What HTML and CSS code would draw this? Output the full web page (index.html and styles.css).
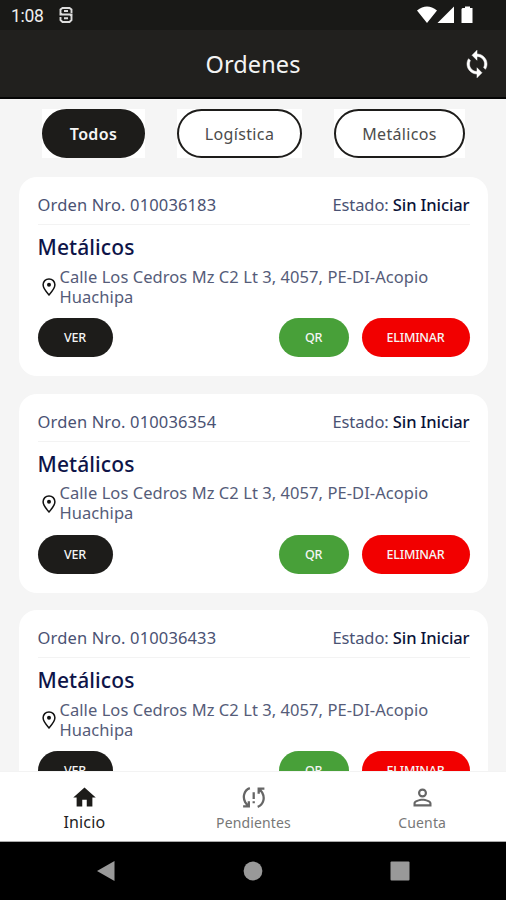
FILE: index.html
```html
<!DOCTYPE html>
<html lang="es">
<head>
<meta charset="utf-8">
<title>Ordenes</title>
<link rel="stylesheet" href="styles.css">
</head>
<body>
<div class="status">
  <span class="time">1:08</span>
  <svg class="badge" viewBox="0 0 14 18"><path d="M12.500 7V3.500L10.500 2h-7L1.500 3.500V7L3 8.500h8L12.500 10v4l-2 2h-7l-2-2v-3M.5 8.500h13M5 5h4M5 12.300h4" fill="none" stroke="#ddd" stroke-width="1.900"/></svg>
  <svg class="signals" viewBox="0 0 58 18"><path d="M0 4.500Q10 -3.500 20 4.500L10 17Z M20.500 17L37 .5V17Z M45.500 2h2.500V.5h5V2h2.500V17h-11V3z" fill="#fff"/></svg>
</div>
<header class="header">
  <h1 class="title">Ordenes</h1>
  <svg class="sync" viewBox="0 0 24 24"><path d="M12 4V1L8 5l4 4V6c3.310 0 6 2.690 6 6 0 1.010-.25 1.970-.7 2.800l1.460 1.460C19.540 15.030 20 13.570 20 12c0-4.420-3.580-8-8-8zm0 14c-3.310 0-6-2.690-6-6 0-1.010.25-1.970.7-2.800L5.240 7.740C4.460 8.970 4 10.430 4 12c0 4.420 3.580 8 8 8v3l4-4-4-4v3z" fill="#fff" stroke="#fff" stroke-width=".4"/></svg>
</header>
<main class="content">
  <div class="filters">
    <div class="chip-box todos"><button class="chip active">Todos</button></div>
    <div class="chip-box logistica"><button class="chip">Logística</button></div>
    <div class="chip-box metalicos"><button class="chip">Metálicos</button></div>
  </div>
  <section class="cards">
    <article class="card">
      <div class="top"><span class="number">Orden Nro. 010036183</span><span class="state">Estado: <b>Sin Iniciar</b></span></div>
      <h2 class="kind">Metálicos</h2>
      <div class="place"><svg class="pin" viewBox="0 0 14 18"><path d="M7 .9C3.600.9 1.100 3.500 1.100 6.800 1.100 10.500 7 16.900 7 16.900S12.900 10.500 12.900 6.800C12.900 3.500 10.400.9 7 .9Z" fill="none" stroke="#111" stroke-width="1.500"/><circle cx="7" cy="6.800" r="2" fill="#111"/></svg><p class="address">Calle Los Cedros Mz C2 Lt 3, 4057, PE-DI-Acopio Huachipa</p></div>
      <div class="actions"><button class="btn view">VER</button><button class="btn qr">QR</button><button class="btn remove">ELIMINAR</button></div>
    </article>
    <article class="card">
      <div class="top"><span class="number">Orden Nro. 010036354</span><span class="state">Estado: <b>Sin Iniciar</b></span></div>
      <h2 class="kind">Metálicos</h2>
      <div class="place"><svg class="pin" viewBox="0 0 14 18"><path d="M7 .9C3.600.9 1.100 3.500 1.100 6.800 1.100 10.500 7 16.900 7 16.900S12.900 10.500 12.900 6.800C12.900 3.500 10.400.9 7 .9Z" fill="none" stroke="#111" stroke-width="1.500"/><circle cx="7" cy="6.800" r="2" fill="#111"/></svg><p class="address">Calle Los Cedros Mz C2 Lt 3, 4057, PE-DI-Acopio Huachipa</p></div>
      <div class="actions"><button class="btn view">VER</button><button class="btn qr">QR</button><button class="btn remove">ELIMINAR</button></div>
    </article>
    <article class="card">
      <div class="top"><span class="number">Orden Nro. 010036433</span><span class="state">Estado: <b>Sin Iniciar</b></span></div>
      <h2 class="kind">Metálicos</h2>
      <div class="place"><svg class="pin" viewBox="0 0 14 18"><path d="M7 .9C3.600.9 1.100 3.500 1.100 6.800 1.100 10.500 7 16.900 7 16.900S12.900 10.500 12.900 6.800C12.900 3.500 10.400.9 7 .9Z" fill="none" stroke="#111" stroke-width="1.500"/><circle cx="7" cy="6.800" r="2" fill="#111"/></svg><p class="address">Calle Los Cedros Mz C2 Lt 3, 4057, PE-DI-Acopio Huachipa</p></div>
      <div class="actions"><button class="btn view">VER</button><button class="btn qr">QR</button><button class="btn remove">ELIMINAR</button></div>
    </article>
  </section>
</main>
<nav class="tabs">
  <a class="tab current"><svg class="tab-icon" viewBox="0 0 24 24"><path d="M10 20v-6h4v6h5v-8h3L12 3 2 12h3v8z" fill="#1d1c1a"/></svg><span>Inicio</span></a>
  <a class="tab pending"><svg class="tab-icon" viewBox="0 0 26 24"><path d="M9.500 3C3.500 5 2.500 12 5 16.500L7.500 20M3 20.500h5.500v-5M17 21C23 19 24 12 21.500 7.500L19 4M23.500 3.500H18v5M13.200 7v6.500M13.200 15.500v2" fill="none" stroke="#666" stroke-width="2.200"/></svg><span>Pendientes</span></a>
  <a class="tab account"><svg class="tab-icon" viewBox="0 0 24 24"><path d="M12 5.900a2.100 2.100 0 1 1 0 4.200 2.100 2.100 0 0 1 0-4.200m0 9c2.970 0 6.100 1.460 6.100 2.100v1.100H5.900V17c0-.64 3.130-2.100 6.100-2.100M12 4C9.790 4 8 5.790 8 8s1.790 4 4 4 4-1.790 4-4-1.790-4-4-4zm0 9c-2.670 0-8 1.340-8 4v3h16v-3c0-2.660-5.330-4-8-4z" fill="#666"/></svg><span>Cuenta</span></a>
</nav>
<footer class="system">
  <svg viewBox="0 0 20 22"><path d="M1 11L18.500 1v20z" fill="#999"/></svg>
  <svg viewBox="0 0 20 22"><circle cx="10" cy="11" r="9.400" fill="#999"/></svg>
  <svg viewBox="0 0 20 22"><rect x=".5" y="1.500" width="19" height="19" rx="1" fill="#999"/></svg>
</footer>
</body>
</html>
```
FILE: styles.css
```css
* { box-sizing: border-box; }
body { margin: 0; width: 506px; height: 900px; overflow: hidden; display: flex; flex-direction: column; background: #f5f5f5; font-family: "Noto Sans", "Open Sans", sans-serif; }
h1, h2, p { margin: 0; }
button { border: 0; padding: 0; font: inherit; }
svg { display: block; flex: none; }

.status { height: 30px; flex: none; background: #191917; display: flex; align-items: center; padding: 0 31px 0 11px; }
.time { color: #eee; font: 400 17.500px/30px Roboto, sans-serif; letter-spacing: -.3px; width: 48px; padding-top: 2px; }
.badge { width: 14px; height: 18px; }
.signals { width: 58px; height: 18px; margin-left: auto; }

.header { height: 69px; flex: none; background: #21201e; border-bottom: 2px solid #050505; display: grid; grid-template-columns: 1fr auto 1fr; align-items: center; padding: 0 14px; }
.title { grid-column: 2; color: #f3f3f3; font-weight: 400; font-size: 23.500px; letter-spacing: .1px; line-height: 32px; padding-top: 1px; }
.sync { width: 30px; height: 30px; justify-self: end; }

.content { height: 672px; flex: none; overflow: hidden; }
.filters { display: flex; gap: 32px; padding: 10px 0 0 42px; }
.chip-box { height: 49px; background: #fff; }
.todos { width: 103px; }
.logistica { width: 125px; }
.metalicos { width: 131px; }
.chip { width: 100%; height: 49px; border: 2px solid #1d1c1a; border-radius: 25px; background: #fff; color: #4c4c4c; font-size: 16px; letter-spacing: .35px; }
.active { background: #1d1c1a; color: #f5f5f5; font-weight: 600; }

.cards { padding: 19px 18px 0 19px; display: flex; flex-direction: column; gap: 17.500px; }
.card { height: 199px; flex: none; background: #fff; border-radius: 18px; padding: 10px 18.500px 0 18.500px; }
.top { height: 38px; border-bottom: 1px solid #f3f3f3; display: flex; justify-content: space-between; line-height: 35px; font-size: 16.500px; color: #4a5273; white-space: nowrap; }
.number { letter-spacing: .14px; }
.state { letter-spacing: -.1px; }
.state b { color: #0a1238; font-weight: 500; }
.kind { color: #0e1448; font-size: 21px; letter-spacing: .1px; font-weight: 500; line-height: 30px; padding-top: 7px; height: 42px; }
.place { display: flex; align-items: center; height: 40px; padding-left: 4px; }
.pin { width: 14px; height: 18px; margin-right: 4px; }
.address { font-size: 16.500px; letter-spacing: .06px; line-height: 20px; color: #555c79; width: 390px; margin-top: -1px; }
.actions { display: flex; margin-top: 11px; }
.btn { height: 39px; border-radius: 20px; color: #f5f5f5; font-size: 12.500px; font-weight: 500; letter-spacing: -.25px; }
.view { width: 75px; background: #1d1c1a; margin-right: auto; }
.qr { width: 70px; background: #48a039; margin-right: 13px; }
.remove { width: 108px; background: #f20000; }

.tabs { height: 71px; flex: none; background: #fff; border-top: 1px solid #f3f3f3; border-bottom: 1px solid #aaa; display: grid; grid-template-columns: repeat(3, 1fr); }
.tab { display: flex; flex-direction: column; align-items: center; padding-top: 12px; color: #777; font-size: 14px; letter-spacing: .15px; line-height: 24px; }
.tab-icon { width: 27px; height: 27px; }
.pending, .account { padding-left: 1px; }
.current { color: #222; font-size: 16px; line-height: 22px; }

.system { flex: 1; background: #000; display: flex; justify-content: center; gap: 127px; padding-top: 18px; }
.system svg { width: 20px; height: 22px; }
```
